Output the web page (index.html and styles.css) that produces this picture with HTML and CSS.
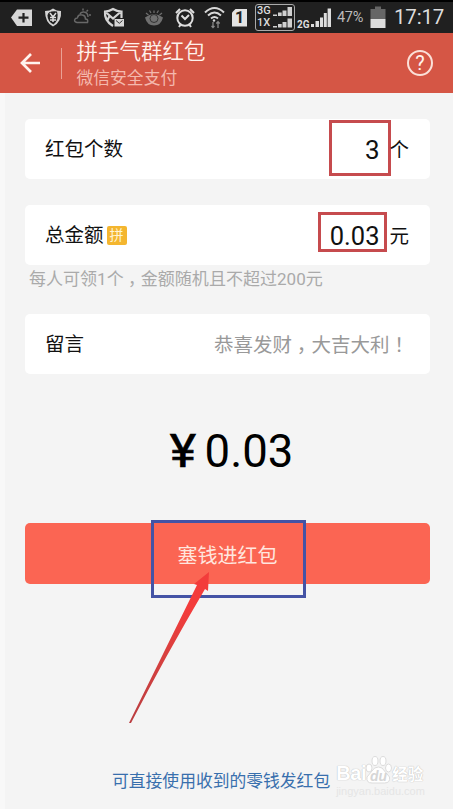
FILE: index.html
```html
<!DOCTYPE html>
<html lang="zh-CN">
<head>
<meta charset="utf-8">
<title>拼手气群红包</title>
<link rel="stylesheet" href="styles.css">
</head>
<body>
<div class="screen">
  <div class="status">
    <svg width="36" height="32" viewBox="0 0 36 32"><path d="M11 16.500L17 8.500H32V25H17Z" fill="#d6d6d6"/><path d="M23.500 12v9.500M18.500 16.700h10" stroke="#222" stroke-width="2.200"/></svg>
    <svg width="34" height="32" viewBox="36 0 34 32"><path d="M45 10q5 0 8-2.500q3.500 2.500 8 2.500q1 11-8 15.500q-8-4-8-15.500Z" fill="#d4d4d4"/><path d="M57 10.500q-9-1-9.500 4q0 6 6 9q6-5 3.500-13Z" fill="#222"/><path d="M50 12l3 4l3-4M53 16v5M50 16.500h6M50 19h6" stroke="#ddd" stroke-width="1.500" fill="none"/></svg>
    <svg width="30" height="32" viewBox="70 0 30 32"><path d="M77 21.500q-4-1-1.500-4q2 0 2-1q1-3.500 5-2.500q3 .5 3 4q3 0 2 3.500Z M80 13q1-2.500 4-2q4 .5 4 5M83 7.500v2M88 9l-1.500 1.500M91 14h-2" fill="none" stroke="#686868" stroke-width="1.500"/></svg>
    <svg width="42" height="32" viewBox="100 0 42 32"><path d="M121.500 17v-6.500q-4.500 0-8.500-2.500q-4 2.500-8 2.500q-1 9 8 14.500M105.500 11l7.500 6.500l7.500-6.500M109.500 15l-2.500 5" fill="none" stroke="#d4d4d4" stroke-width="2.200"/><path d="M114.500 18h9.500v7.500h-9.500z" fill="#d6d6d6"/><path d="M116 19.500l3.300 2.800l3.200-2.800" fill="none" stroke="#333"/></svg>
    <svg width="30" height="32" viewBox="142 0 30 32"><path d="M145 16.500q9-7 18 0q-2 8-9 8T145 16.500Z" fill="#707070"/><circle cx="154" cy="17.500" r="4" fill="none" stroke="#333"/><path d="M154 12V9.500M148.500 14l-2.500-2M159.500 14l2.500-2M151 12l-1.500-2.500M157 12l1.500-2.500" stroke="#707070" stroke-width="1.200"/></svg>
    <svg width="30" height="32" viewBox="172 0 30 32"><circle cx="185" cy="17" r="7.700" fill="none" stroke="#dedede" stroke-width="2"/><path d="M176 12l4-4M194 12l-4-4M179 26l2-3M191 26l-2-3M181.500 14.500l3.500 3.500l4-4" fill="none" stroke="#dedede" stroke-width="2"/></svg>
    <svg width="28" height="32" viewBox="202 0 28 32"><path d="M205 11.500q9.500-9 19 0M208 14.500q6.500-6 13 0M211 17.500q3.500-3 7 0" fill="none" stroke="#d8d8d8" stroke-width="2"/><circle cx="214" cy="19.500" r="1.200" fill="#d8d8d8"/><path d="M213 26.500V21M211.500 25l1.500 1.500l1.500-1.500M218 21v6M216.300 22.500l1.700-1.800l1.700 1.800" fill="none" stroke="#888" stroke-width="1.300"/></svg>
    <div class="sim">1</div>
    <div class="dual">
      <span>3G</span><span>1X</span>
      <svg width="22" height="24" viewBox="0 0 22 24"><path d="M1 11V9.500h4V11zM6 11V7.500h3.700V11zM10.500 11V5.500H14.500V11zM15.500 11V2h4.500v9zM1 22.500v-1.500h4v1.500zM6 22.500v-3.500h3.700v3.500zM10.500 22.500v-5.500H14.500v5.500zM15.500 22.500v-9h4.500v9z" fill="#d0d0d0"/></svg>
    </div>
    <div class="net">2G</div>
    <svg class="bars" width="21" height="32" viewBox="311 0 21 32"><path d="M311 26v-3h3v3zM315.500 26v-6h3.500v6zM320 26V16.500h3V26zM323.800 26V12h3V26zM327.600 26V7.500h3.400V26z" fill="#ddd"/></svg>
    <div class="pct">47%</div>
    <svg width="26" height="32" viewBox="366 0 26 32"><path d="M370.500 8H375V5.500h6V8h4.500v10h-15z" fill="#666"/><path d="M370.500 18h15v9h-15z" fill="#ddd"/></svg>
    <div class="time">17:17</div>
  </div>

  <header class="header">
    <svg class="back" width="22" height="22" viewBox="0 0 22 22"><path d="M20 11H2M11 2L2 11l9 9" fill="none" stroke="#fff3ee" stroke-width="2.700"/></svg>
    <div class="sep"></div>
    <div class="titles">
      <h1>拼手气群红包</h1>
      <p>微信安全支付</p>
    </div>
    <div class="help">?</div>
  </header>

  <main class="main">
    <section class="card">
      <label>红包个数</label>
      <div class="mark mark-count">3</div>
      <span class="unit">个</span>
    </section>
    <section class="card card-total">
      <label>总金额</label><span class="tag">拼</span>
      <div class="mark mark-total">0.03</div>
      <span class="unit">元</span>
    </section>
    <p class="hint">每人可领1个<span class="mid">，</span>金额随机且不超过200元</p>
    <section class="card card-note">
      <label>留言</label>
      <span class="note">恭喜发财<span class="mid">，</span>大吉大利<span class="mid">！</span></span>
    </section>
    <div class="amount"><span class="yen">¥</span>0.03</div>
    <div class="submit">塞钱进红包
      <div class="focus"></div>
      <svg class="arrow" width="90" height="160" viewBox="125 567 90 160"><defs><linearGradient id="g" x1="0" y1="1" x2="0" y2="0"><stop offset="0" stop-color="#b93d40"/><stop offset=".45" stop-color="#d8403f"/><stop offset=".75" stop-color="#f33c3b"/></linearGradient></defs><path d="M129 723L197 585L194 584L209 572L208 591L205 589Q165 657 131 723Z" fill="url(#g)"/></svg>
    </div>
  </main>

  <footer class="footer">
    <span class="link">可直接使用收到的零钱发红包</span>
    <div class="watermark">
      <div class="brand"><span class="bai">Bai</span><svg width="27" height="30" viewBox="0 0 27 30"><g fill="#fff" stroke="#dcdcdc" stroke-width="1"><ellipse cx="4" cy="13" rx="3" ry="4"/><ellipse cx="10" cy="6" rx="3" ry="4.500"/><ellipse cx="18" cy="6" rx="3" ry="4.500"/><ellipse cx="23.500" cy="13" rx="3" ry="4"/><path d="M13.500 12q4 0 6 4l5 6q1 6-5 6H7q-6 0-5-6l5-6q2-4 6.500-4Z"/></g><text x="13.500" y="26" text-anchor="middle">du</text></svg><span class="cn">经验</span></div>
      <div class="site">jingyan.baidu.com</div>
    </div>
  </footer>
</div>
</body>
</html>
```
FILE: styles.css
```css
* { box-sizing: border-box; }
body {
  margin: 0;
  font-family: Roboto, "Noto Sans CJK SC", sans-serif;
  background: #f4f4f4;
  color: #111;
}
h1, p { margin: 0; font-weight: 400; }
svg { display: block; flex: none; }
.screen {
  width: 453px;
  height: 809px;
  display: flex;
  flex-direction: column;
  overflow: hidden;
  background: linear-gradient(90deg, #f8f8f8 5px, #f4f4f4 5px);
}
.status {
  height: 33px;
  flex: none;
  display: flex;
  align-items: center;
  background: #202020;
  border-top: 2px solid #000;
  color: #ddd;
}
.status > svg { margin-top: -2px; }
.sim {
  width: 15px;
  height: 18px;
  margin-left: 2px;
  background: #e4e4e4;
  color: #222;
  font: 700 16px/18px Roboto, sans-serif;
  text-align: center;
  clip-path: polygon(4px 0, 100% 0, 100% 100%, 0 100%, 0 4px);
}
.dual {
  width: 40px;
  height: 27px;
  margin-left: 8px;
  border: 1.5px solid #aaa;
  border-radius: 3px;
  display: grid;
  grid-template: 12px 12px / 16px 22px;
  font: 500 11px/12px Roboto, sans-serif;
}
.dual span { padding-left: 1px; }
.dual svg { grid-area: 1 / 2 / 3 / 3; }
.net { margin-left: 2px; padding-top: 14px; width: 14px; font: 700 10px/10px Roboto, sans-serif; }
.pct { margin-left: 5px; width: 29px; font-size: 14.5px; letter-spacing: -.3px; color: #bbb; }
.time { margin: -1px 0 0 2px; font-size: 20.5px; letter-spacing: -.2px; }

.header {
  height: 60px;
  flex: none;
  display: flex;
  align-items: center;
  padding: 0 20px;
  background: #d55645;
  color: #fff2ec;
}
.sep { width: 1px; height: 31px; margin-left: 19px; background: #eaa195; }
.titles { margin-left: 14.5px; padding-top: 3px; flex: 1; }
.titles h1 { font-size: 21.5px; line-height: 27px; font-weight: 350; }
.titles p { font-size: 16.8px; line-height: 26px; color: #f4b9ae; }
.help {
  width: 26px;
  height: 26px;
  border: 2px solid #fbe0d8;
  border-radius: 50%;
  text-align: center;
  font-size: 20px;
  line-height: 22px;
}

.main { padding: 26px 23px 0 25px; flex: 1; }
.card {
  height: 60px;
  display: flex;
  align-items: center;
  padding: 0 21px 0 20px;
  border-radius: 5px;
  background: #fff;
  font-size: 19.5px;
}
.card label { line-height: 28px; padding-top: 2px; }
.card-total { margin-top: 26px; }
.mark {
  margin-left: auto;
  border: 3px solid #c64b4e;
  text-align: right;
  font-size: 26px;
}
.mark-count { width: 62px; height: 56px; line-height: 54px; padding-right: 8px; margin-top: -2px; }
.mark-total { width: 69px; height: 40px; line-height: 42px; padding-right: 4px; font-size: 25.5px; margin-top: -6px; }
.mark-total + .unit { margin-left: 3px; }
.unit { width: 19.5px; margin-top: -2px; }
.mark-count + .unit { margin-left: -1px; }
.tag {
  width: 20px;
  height: 19px;
  margin-left: 3px;
  border-radius: 2px;
  background: #f4b62f;
  color: #fff4d4;
  font-size: 14px;
  line-height: 19px;
  text-align: center;
}
.hint { padding: 1px 0 0 4px; height: 26px; font-size: 17.05px; line-height: 26px; color: #aaa; white-space: nowrap; }
.mid { display: inline-block; width: 1em; text-align: center; font-feature-settings: "halt"; }
.card-note { margin-top: 23px; }
.note { margin-left: auto; margin-top: -2px; color: #999; }
.amount {
  margin-top: 51px;
  height: 54px;
  padding-left: 9px;
  font-size: 45.5px;
  line-height: 54px;
  text-align: center;
  color: #000;
}
.yen { display: inline-block; margin-right: 10px; transform: scaleX(1.1); -webkit-text-stroke: .7px #000; }
.submit {
  position: relative;
  height: 61px;
  margin-top: 44px;
  border-radius: 5px;
  background: #fb6553;
  color: #ffe6df;
  font-size: 20px;
  line-height: 66px;
  text-align: center;
}
.focus {
  position: absolute;
  left: 126px;
  top: -3px;
  width: 155px;
  height: 78px;
  border: 3px solid #4453a5;
}
.arrow { position: absolute; left: 100px; top: 44px; }

.footer {
  height: 60px;
  flex: none;
  display: flex;
  padding-left: 112px;
}
.link { font-size: 16.8px; line-height: 64px; color: #386fad; white-space: nowrap; }
.watermark { margin: 4px 0 0 6px; color: #fff; }
.brand {
  display: flex;
  align-items: flex-end;
  height: 32px;
  font: 700 20px/24px "Liberation Sans", sans-serif;
  text-shadow: 0 0 1px #bbb, 0 0 1px #ccc;
}
.bai { width: 29px; letter-spacing: -.4px; }
.brand text { font: italic 700 14px "Liberation Sans", sans-serif; fill: #d6d6d6; text-shadow: none; }
.brand .cn { font: 700 15.5px/24px "Noto Sans CJK SC", sans-serif; }
.site { font: 11px/13px "Liberation Sans", sans-serif; color: #e5e5e5; }
```
